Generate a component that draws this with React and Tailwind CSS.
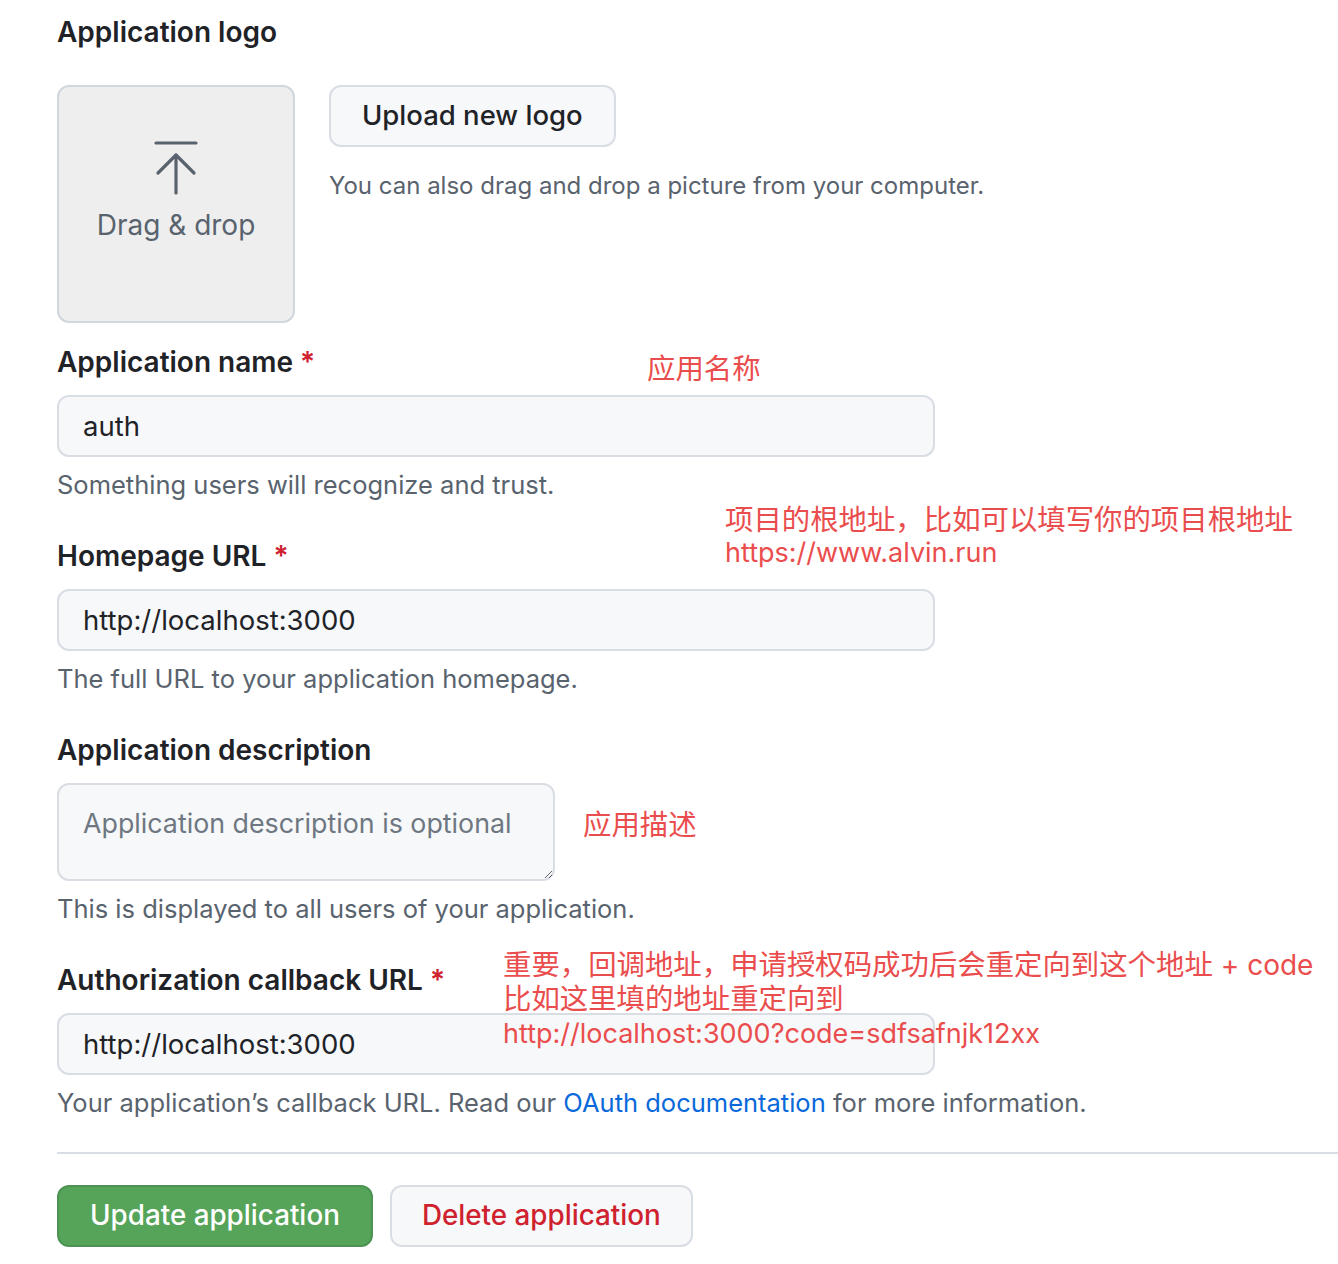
import React from 'react';

const sans = { fontFamily: 'Inter, "Liberation Sans", sans-serif' };
const note = { fontFamily: 'Inter, "Noto Sans CJK SC", sans-serif' };

function Label({ children, required }) {
  return (
    <div className="text-[28px] leading-[42px] font-semibold text-[#1f2328]">
      {children}
      {required && <span className="text-[#cf222e]"> *</span>}
    </div>
  );
}

function Note({ children }) {
  return <p className="mt-[10px] text-[25.5px] leading-[36px] text-[#59636e]">{children}</p>;
}

function TextField({ value }) {
  return (
    <input
      defaultValue={value}
      className="mt-[12px] block w-[878px] h-[62px] px-[24px] rounded-[12px] border-2 border-[#d8dee4] bg-[#f6f8fa] text-[27.5px] text-[#1f2328] outline-none"
    />
  );
}

export default function App() {
  return (
    <div className="relative min-h-[1264px] bg-white overflow-hidden" style={sans}>
      <div className="pl-[57px] pt-[11px]">
        <h2 className="text-[28px] leading-[42px] font-semibold text-[#1f2328]">Application logo</h2>

        <div className="mt-[32px] flex gap-[34px]">
          <div className="w-[238px] h-[238px] rounded-[12px] border-2 border-[#d0d7de] bg-[#eeeeee] flex flex-col items-center pt-[54px]">
            <svg width="44" height="54" viewBox="0 0 44 54" fill="none" stroke="#59636e" strokeWidth="3.2" strokeLinecap="round" strokeLinejoin="round">
              <line x1="2" y1="2" x2="42" y2="2" />
              <line x1="22" y1="14" x2="22" y2="52" />
              <polyline points="4,32 22,14 40,32" />
            </svg>
            <div className="mt-[12px] text-[28px] leading-[36px] text-[#59636e]">Drag &amp; drop</div>
          </div>

          <div className="flex flex-col items-start">
            <button className="h-[62px] px-[31px] rounded-[12px] border-2 border-[#d8dee4] bg-[#f6f8fa] text-[27.5px] font-medium text-[#1f2328]">
              Upload new logo
            </button>
            <p className="mt-[21px] text-[24px] leading-[36px] text-[#59636e]">
              You can also drag and drop a picture from your computer.
            </p>
          </div>
        </div>

        <div className="mt-[18px]">
          <Label required>Application name</Label>
          <TextField value="auth" />
          <Note>Something users will recognize and trust.</Note>
        </div>

        <div className="mt-[32px]">
          <Label required>Homepage URL</Label>
          <TextField value="http://localhost:3000" />
          <Note>The full URL to your application homepage.</Note>
        </div>

        <div className="mt-[32px]">
          <Label>Application description</Label>
          <textarea
            placeholder="Application description is optional"
            className="mt-[12px] block w-[498px] h-[98px] pl-[24px] pr-[8px] py-[18px] rounded-[12px] border-2 border-[#d8dee4] bg-[#f6f8fa] text-[26.8px] leading-[40px] text-[#1f2328] placeholder:text-[#6e7781] outline-none"
          />
          <Note>This is displayed to all users of your application.</Note>
        </div>

        <div className="mt-[32px]">
          <Label required>Authorization callback URL</Label>
          <TextField value="http://localhost:3000" />
          <Note>
            Your application’s callback URL. Read our{' '}
            <a href="#" className="text-[#0969da]">OAuth documentation</a> for more information.
          </Note>
        </div>

        <div className="mt-[31px] h-[2px] bg-[#d8dee4]" />

        <div className="mt-[31px] flex gap-[17px]">
          <button className="h-[62px] px-[31px] rounded-[12px] border-2 border-[#4c9453] bg-[#55a459] text-[27.8px] font-medium text-white">
            Update application
          </button>
          <button className="h-[62px] px-[30px] rounded-[12px] border-2 border-[#d8dee4] bg-[#f6f8fa] text-[27.8px] font-medium text-[#cf222e]">
            Delete application
          </button>
        </div>
      </div>

      <div className="absolute left-[647px] top-[352px] text-[28.4px] leading-[33px] text-[#ea4d4d]" style={note}>
        应用名称
      </div>
      <div className="absolute left-[725px] top-[503px] text-[28.4px] leading-[33px] text-[#ea4d4d]" style={note}>
        <div>项目的根地址，比如可以填写你的项目根地址</div>
        <div className="text-[27px]">https://www.alvin.run</div>
      </div>
      <div className="absolute left-[583px] top-[808px] text-[28.4px] leading-[33px] text-[#ea4d4d]" style={note}>
        应用描述
      </div>
      <div className="absolute left-[503px] top-[948px] text-[28.4px] leading-[33px] text-[#ea4d4d]" style={note}>
        <div>
          重要，回调地址，申请授权码成功后会重定向到这个地址 <span className="text-[28px]">+ code</span>
        </div>
        <div>比如这里填的地址重定向到</div>
        <div className="mt-[2px] text-[27px]">http://localhost:3000?code=sdfsafnjk12xx</div>
      </div>
    </div>
  );
}
